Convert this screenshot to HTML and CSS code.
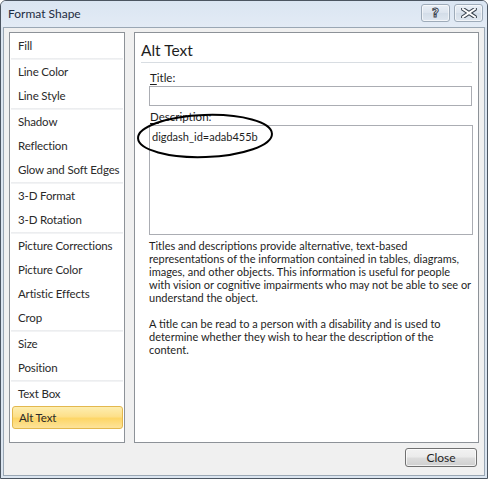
FILE: index.html
```html
<!DOCTYPE html>
<html>
<head>
<meta charset="utf-8">
<link rel="stylesheet" href="styles.css">
</head>
<body>
<div class="window">
  <div class="titlebar">
    <span class="title">Format Shape</span>
    <div class="caption-buttons">
      <div class="cbtn help"><span class="qmark">?</span></div>
      <div class="cbtn close-x">
        <svg width="16" height="10" viewBox="0 0 16 10">
          <path d="M2 1 L14 9 M14 1 L2 9" stroke="#3a4450" stroke-width="4" stroke-linecap="square" fill="none"/>
          <path d="M2 1 L14 9 M14 1 L2 9" stroke="#ffffff" stroke-width="2" stroke-linecap="square" fill="none"/>
        </svg>
      </div>
    </div>
  </div>
  <div class="body">
    <div class="main">
      <div class="nav">
        <div class="item">Fill</div>
        <div class="sep"></div>
        <div class="item">Line Color</div>
        <div class="item">Line Style</div>
        <div class="sep"></div>
        <div class="item">Shadow</div>
        <div class="item">Reflection</div>
        <div class="item">Glow and Soft Edges</div>
        <div class="sep"></div>
        <div class="item">3-D Format</div>
        <div class="item">3-D Rotation</div>
        <div class="sep"></div>
        <div class="item">Picture Corrections</div>
        <div class="item">Picture Color</div>
        <div class="item">Artistic Effects</div>
        <div class="item">Crop</div>
        <div class="sep"></div>
        <div class="item">Size</div>
        <div class="item">Position</div>
        <div class="sep"></div>
        <div class="item">Text Box</div>
        <div class="item selected">Alt Text</div>
      </div>
      <div class="panel">
        <div class="heading">Alt Text</div>
        <div class="form">
          <div class="label"><u>T</u>itle:</div>
          <div class="input"></div>
          <div class="label"><u>D</u>escription:</div>
          <div class="textarea">digdash_id=adab455b</div>
          <p class="help-text">Titles and descriptions provide alternative, text-based<br>representations of the information contained in tables, diagrams,<br>images, and other objects. This information is useful for people<br>with vision or cognitive impairments who may not be able to see or<br>understand the object.</p>
          <p class="help-text">A title can be read to a person with a disability and is used to<br>determine whether they wish to hear the description of the<br>content.</p>
        </div>
      </div>
    </div>
    <div class="footer">
      <div class="button">Close</div>
    </div>
  </div>
  <svg class="circle" width="160" height="60" viewBox="0 0 160 60">
    <ellipse cx="77" cy="28" rx="67" ry="21" transform="rotate(-2 77 28)" fill="none" stroke="#000" stroke-width="2"/>
  </svg>
</div>
</body>
</html>
```
FILE: styles.css
```css
* { box-sizing: border-box; }
html, body { margin: 0; padding: 0; }
body {
  width: 488px;
  height: 479px;
  font-family: Lato, "Liberation Sans", sans-serif;
  color: #1e1e1e;
  background: #ffffff;
}
.window {
  position: relative;
  width: 488px;
  height: 479px;
  border: 1px solid #4b5561;
  border-radius: 6px 6px 0 0;
  background: #dbe5f0;
  display: flex;
  flex-direction: column;
}
.titlebar {
  height: 26px;
  display: flex;
  align-items: flex-start;
  justify-content: space-between;
  padding: 0 4px 0 7px;
  background: linear-gradient(#dae5f2, #e3ebf5);
  border-radius: 5px 5px 0 0;
}
.title {
  font-size: 12px;
  line-height: 26px;
  color: #1d2c42;
}
.caption-buttons {
  display: flex;
  gap: 4px;
  padding-top: 3px;
}
.cbtn {
  width: 29px;
  height: 18px;
  border: 1px solid #9eabb9;
  border-radius: 3px;
  background: linear-gradient(#e9eff6, #dce4ee 50%, #d3dde8 51%, #dfe7f0);
  box-shadow: inset 0 0 0 1px rgba(255,255,255,0.6);
  display: flex;
  align-items: center;
  justify-content: center;
}
.qmark {
  font-family: "DejaVu Sans", sans-serif;
  font-weight: bold;
  font-size: 12px;
  line-height: 12px;
  color: #ffffff;
  -webkit-text-stroke: 1px #3a4450;
}
.body {
  flex: 1;
  margin: 0 2px 2px 2px;
  border: 1px solid #9aa7b4;
  background: #f0f0f0;
  padding: 4px 5px 0 5px;
  display: flex;
  flex-direction: column;
}
.main {
  display: flex;
  gap: 9px;
  height: 411px;
}
.nav {
  width: 116px;
  border: 1px solid #8d9298;
  background: #ffffff;
  padding: 1px 1px 0 1px;
  font-size: 11.5px;
  letter-spacing: -0.15px;
}
.item {
  height: 24px;
  line-height: 24px;
  padding-left: 7px;
  color: #2a2a2a;
  white-space: nowrap;
}
.sep {
  height: 2px;
  margin: 0;
  background: linear-gradient(#e9ebed, #f5f6f7);
}
.item.selected {
  margin: 0 0 0 1px;
  height: 23px;
  line-height: 22px;
  padding-left: 6px;
  border: 1px solid #e3b84e;
  border-radius: 3px;
  background: linear-gradient(#fdeeb0, #fde08a 45%, #fdd667 55%, #fde39a);
}
.panel {
  width: 345px;
  border: 1px solid #8d9298;
  background: #ffffff;
  padding: 0 6px 0 6px;
}
.heading {
  font-size: 15.5px;
  line-height: 20px;
  padding-top: 7px;
  padding-bottom: 2px;
  border-bottom: 1px solid #d8dde2;
  color: #1e1e1e;
}
.form {
  padding: 7px 0 0 8px;
  font-size: 11.5px;
}
.label {
  line-height: 15px;
  padding-left: 1px;
  color: #1e1e1e;
}
.label u { text-decoration-thickness: 1px; text-underline-offset: 2px; }
.input {
  height: 20px;
  margin: 1px 0 3px 0;
  border: 1px solid #abadb3;
  width: 323px;
}
.textarea {
  height: 110px;
  width: 324px;
  margin-top: 1px;
  border: 1px solid #abadb3;
  padding: 3px 0 0 2px;
  font-size: 11px;
  line-height: 15px;
}
.help-text {
  margin: 4px 0 13px 0;
  font-size: 11px;
  line-height: 13px;
  white-space: nowrap;
  color: #1e1e1e;
}
.footer {
  display: flex;
  justify-content: flex-end;
  padding: 5px 2px 0 0;
}
.button {
  width: 72px;
  height: 19px;
  border: 1px solid #707070;
  border-radius: 3px;
  background: linear-gradient(#f2f2f2, #ebebeb 48%, #dddddd 52%, #cfcfcf);
  box-shadow: inset 0 0 0 1px rgba(255,255,255,0.7);
  font-size: 12px;
  line-height: 17px;
  text-align: center;
  color: #1e1e1e;
}
.circle {
  position: absolute;
  left: 127px;
  top: 107px;
  pointer-events: none;
}
```
